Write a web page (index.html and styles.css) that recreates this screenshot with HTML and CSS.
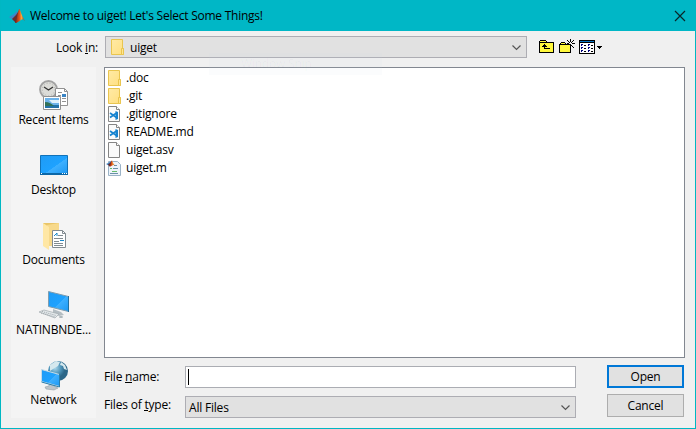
FILE: index.html
```html
<!DOCTYPE html>
<html lang="en">
<head>
<meta charset="utf-8">
<title>Welcome to uiget!</title>
<link rel="stylesheet" href="styles.css">
</head>
<body>
<svg width="0" height="0" class="defs">
  <defs>
    <linearGradient id="fold" x1="0" y1="0" x2="1" y2="1"><stop offset="0" stop-color="#ffeaa6"/><stop offset="1" stop-color="#ffdf80"/></linearGradient>
    <linearGradient id="blue" x1="0" y1="0" x2="1" y2="1"><stop offset="0" stop-color="#1f9bf5"/><stop offset=".55" stop-color="#1ea2ff"/><stop offset=".56" stop-color="#3eb0ff"/><stop offset="1" stop-color="#1b98f3"/></linearGradient>
    <radialGradient id="globe" cx=".35" cy=".35"><stop offset="0" stop-color="#a9d6ea"/><stop offset=".6" stop-color="#4d94b9"/><stop offset="1" stop-color="#2b6688"/></radialGradient>
    <linearGradient id="flame"><stop offset="0" stop-color="#7b1d12"/><stop offset=".45" stop-color="#e2561b"/><stop offset=".65" stop-color="#f5a43a"/><stop offset="1" stop-color="#9c2310"/></linearGradient>
    <symbol id="folder" viewBox="0 0 16 16"><path fill="url(#fold)" stroke="#e9c54f" d="M2.500.500h11v9h1v6h-12z"/><path fill="#ffe591" stroke="#e9c54f" d="M12.500 9.500h2v6h-2z"/></symbol>
    <symbol id="page" viewBox="0 0 16 16"><path fill="#fafafa" stroke="#858585" d="M2.500.500h8l3 3v12h-11z"/><path fill="#fff" stroke="#858585" d="M10.500.500v3h3"/></symbol>
    <symbol id="code" viewBox="0 0 16 16"><use href="#page"/><path fill="none" stroke="#1683d0" stroke-width="1.700" d="M4 7l6.500 4.500M4 11.500l6.500-4.500"/><path fill="#1683d0" d="M9.500 5l2.500 1v7l-2.500 1z"/></symbol>
    <symbol id="matlab" viewBox="0 0 16 16"><path fill="#3f86c6" d="M0 9l5-3 3-3 1 4-5 5z"/><path fill="#6b2a2a" d="M3 11l4-4 4-6-1 10-3 4z"/><path fill="url(#flame)" d="M6 15c2-3 2-8 4-14 1-1 2 6 6 12-2-2-3-2-4-1-2 1-4 3-6 3z"/></symbol>
  </defs>
</svg>
<main class="window">
  <header class="titlebar">
    <svg class="icon16"><use href="#matlab"/></svg>
    <span class="title">Welcome to uiget! Let's Select Some Things!</span>
    <svg class="close" viewBox="0 0 10 10"><path d="M0 0l10 10M10 0L0 10"/></svg>
  </header>
  <section class="lookbar">
    <span class="look-label">Look <u>i</u>n:</span>
    <div class="combo look-combo"><svg class="icon16"><use href="#folder"/></svg><span>uiget</span><svg class="chev" viewBox="0 0 9 5"><path d="M.500.500l4 4 4-4"/></svg></div>
    <nav class="tools">
      <svg width="16" height="16" shape-rendering="crispEdges"><path fill="#fff83c" d="M1 2h6v2h7v9H1z"/><path fill="#000" d="M1 1h6v1H1zM0 2h1v12H0zM7 2h1v1H7zM1 3h14v1H1zM14 3h1v11h-1zM0 13h15v1H0zM5 5h1v5H5zM4 6h3v1H4zM3 7h5v1H3zM5 9h6v1H5z"/></svg>
      <svg width="17" height="16" shape-rendering="crispEdges"><path fill="#fff83c" d="M2 4h4v1H2zM1 6h10v7H1z"/><path fill="#000" d="M2 3h4v1H2zM1 4h1v1H1zM6 4h1v1H6zM0 5h12v1H0zM0 5h1v9H0zM11 5h1v9h-1zM0 13h12v1H0zM11 0h1v3h-1zM8 1h1v1H8zM9 2h1v1H9zM14 1h1v1h-1zM13 2h1v1h-1zM8 4h2v1H8zM13 4h3v1h-3zM10 3h1v1h-1zM12 3h1v1h-1zM12 6h1v1h-1zM13 7h1v1h-1zM14 8h1v1h-1z"/></svg>
      <svg class="views" width="24" height="16" shape-rendering="crispEdges"><path fill="#000" d="M0 1h16v14H0z"/><path fill="#fff" d="M1 4h14v10H1z"/><path fill="#0875c5" d="M1 2h14v1H1z"/><path fill="#000" d="M5 6h2v1H5zM5 9h2v1H5zM5 12h2v1H5zM12 6h2v1h-2zM12 9h2v1h-2zM12 12h2v1h-2zM18 7h5v1h-5zM19 8h3v1h-3zM20 9h1v1h-1z"/><path fill="#000080" d="M2 5h2v1H2zM2 6h1v1H2zM2 8h2v1H2zM2 9h1v1H2zM2 11h2v1H2zM2 12h1v1H2zM9 5h2v1H9zM9 6h1v1H9zM9 8h2v1H9zM9 9h1v1H9zM9 11h2v1H9zM9 12h1v1H9z"/></svg>
    </nav>
  </section>
  <section class="content">
    <aside class="places">
      <div class="place"><svg class="icon32" viewBox="0 0 32 32">
        <circle cx="10.500" cy="9.500" r="8.500" fill="#dcdcd8" stroke="#a2a2a2" stroke-width="1.800"/><circle cx="10.500" cy="9.500" r="6.300" fill="none" stroke="#b0b0b0" stroke-dasharray="1 2"/><path fill="none" stroke="#333" stroke-width="1.300" d="M6 7l4.500 3 4.500-3"/>
        <path fill="#fff" stroke="#919191" d="M17.500 8.500h9l3 3v14h-12z"/><path fill="none" stroke="#919191" d="M26.500 8.500v3h3M20 12.500h4M20 15.500h3M24 18.500h4M24 21.500h4"/><path fill="#3984c4" d="M24 14h4v3h-4z"/>
        <path fill="#fff" stroke="#919191" d="M5.500 16.500h17v13h-17z"/><path fill="#6db3ea" d="M7 18h14v10H7z"/><path fill="#2371a8" d="M7 25h14v3H7z"/><path fill="#317158" d="M7 22c4 0 7 2 9 4H7z"/><path fill="#e0f1fb" d="M11 20h10v3h-7z"/></svg><span>Recent Items</span></div>
      <div class="place"><svg class="icon32" viewBox="0 0 32 32"><path fill="url(#blue)" stroke="#1072b9" d="M2.500 5.500h27v19h-27z"/><path fill="#0b67a7" d="M2 23h28v2H2z"/><path fill="#fff" d="M3 23h1v1H3zM24 23h1v1h-1zM26 23h1v1h-1zM28 23h1v1h-1z"/></svg><span>Desktop</span></div>
      <div class="place"><svg class="icon32" viewBox="0 0 32 32"><path fill="#e9c568" d="M5 3h16v23H9z"/><path fill="#f7d98b" d="M9 5l12-2v23H9z"/><path fill="#ffe7a5" d="M5 3l6 4v23l-6-4z"/><path fill="#fff" stroke="#828b91" d="M14.500 10.500h10l3 3v14h-13z"/><path fill="none" stroke="#828b91" d="M24.500 10.500v3h3M20 15.500h5M16 18.500h9M16 21.500h5M16 23.500h9M16 25.500h9"/><path fill="none" stroke="#1787cb" d="M16 16l3-3v3M22 20.500h4"/></svg><span>Documents</span></div>
      <div class="place"><svg class="icon32" viewBox="0 0 32 32"><path fill="#b4bdc2" d="M15 19l8 3 3 3-5 1-6-3z"/><path fill="url(#blue)" stroke="#7f9daf" d="M10.500 1.500l20 5v15l-20-5z"/><path fill="none" stroke="#226f9f" d="M30.500 6v16"/><path fill="#e3e8ea" stroke="#a0a9ae" stroke-width=".7" d="M1 22l5-2 15 4-4 4z"/><path fill="none" stroke="#9da5aa" stroke-dasharray="1 1" d="M4 21.500l14 4M3 23l14 4"/><ellipse cx="23" cy="27" rx="2" ry="1" fill="#a9b3b8"/></svg><span>NATINBNDE...</span></div>
      <div class="place"><svg class="icon32" viewBox="0 0 32 32"><circle cx="20" cy="11" r="10" fill="url(#globe)"/><path fill="#d5e8ee" d="M12 5l6-4 4 1-2 4-5 3-3 2zM23 2l4 3 2 5-3-1-1-3-3-1z"/><path fill="#bdc5ca" stroke="#89949b" stroke-width=".5" d="M11 23h5v3l4 2-4 2-8-1-1-2 4-1z"/><path fill="url(#blue)" stroke="#c6dce7" d="M3.500 9.500l18 5v12l-18-5z"/><path fill="none" stroke="#287eac" d="M21.500 14v13l-18-5"/></svg><span>Network</span></div>
    </aside>
    <div class="main">
      <ul class="files">
        <li><svg class="icon16"><use href="#folder"/></svg><span>.doc</span></li>
        <li><svg class="icon16"><use href="#folder"/></svg><span>.git</span></li>
        <li><svg class="icon16"><use href="#code"/></svg><span>.gitignore</span></li>
        <li><svg class="icon16"><use href="#code"/></svg><span>README.md</span></li>
        <li><svg class="icon16"><use href="#page"/></svg><span>uiget.asv</span></li>
        <li><svg class="icon16" viewBox="0 0 16 16"><path fill="#edf4fa" stroke="#9bb3c7" d="M2.500 1.500h9l3 3v11h-12z"/><path fill="none" stroke="#6b8fa9" d="M8 5.500h3M7 8.500h5M4 13.500h8"/><path fill="none" stroke="#65bb6e" d="M4 8.500h2M6 11.500h5"/><svg x="0" y="0" width="9" height="7" viewBox="0 0 16 16" preserveAspectRatio="none"><use href="#matlab" width="16" height="16"/></svg></svg><span>uiget.m</span></li>
      </ul>
      <form class="fields">
        <label>File <u>n</u>ame:</label><div class="input"><i class="caret"></i></div><button type="button" class="open">Open</button>
        <label class="type-label">Files of <u>t</u>ype:</label><div class="combo types"><span>All Files</span><svg class="chev" viewBox="0 0 9 5"><path d="M.500.500l4 4 4-4"/></svg></div><button type="button">Cancel</button>
      </form>
    </div>
  </section>
  <div class="ghost">Window Snip</div>
</main>
</body>
</html>
```
FILE: styles.css
```css
* { box-sizing: border-box; }
body { margin: 0; font: 12px/16px "Open Sans", "Noto Sans", sans-serif; color: #000; letter-spacing: -0.2px; overflow: hidden; }
svg { display: block; flex: none; }
.defs { position: absolute; }
.window { position: relative; width: 696px; height: 429px; background: #f0f0f0; border: 1px solid #00b7c3; border-top: 0; }
.titlebar { height: 31px; background: #00b7c6; display: flex; align-items: center; padding: 0 10px 0 8px; }
.title { margin-left: 5px; flex: 1; white-space: nowrap; letter-spacing: -0.24px; }
.close { width: 10px; height: 10px; overflow: visible; }
.close path { stroke: #08272a; stroke-width: 1.200; fill: none; }
.icon16 { width: 16px; height: 16px; }
.icon32 { width: 32px; height: 32px; }
.lookbar { height: 36px; display: flex; align-items: flex-start; padding-top: 5px; }
.look-label { width: 104px; padding: 4px 7px 0 0; text-align: right; }
u { display: inline-block; height: 14px; text-decoration: none; border-bottom: 1px solid #000; vertical-align: top; }
.combo { height: 22px; border: 1px solid #adadb3; background: #e1e1e1; display: flex; align-items: center; padding: 0 5px 0 3px; }
.combo span { padding-top: 2px; }
.combo .chev { margin-left: auto; }
.look-combo { width: 422px; }
.look-combo span { margin-left: 5px; }
.chev { width: 9px; height: 5px; overflow: visible; }
.chev path { fill: none; stroke: #555; stroke-width: 1.200; }
.tools { display: flex; gap: 4px; margin: 3px 0 0 12px; }
.views { margin-left: -1px; }
.content { display: flex; padding-left: 10px; gap: 8px; }
.places { width: 85px; height: 351px; background: #f4f4f4; padding-top: 13px; }
.place { height: 70px; display: flex; flex-direction: column; align-items: center; }
.place span { white-space: nowrap; }
.main { width: 581px; }
.files { width: 581px; height: 291px; margin: 0; padding: 1px; list-style: none; background: #fff; border: 1px solid #828790; }
.files li { height: 18px; display: flex; align-items: center; gap: 4px; }
.fields { display: grid; grid-template-columns: 81px 391px 77px; grid-template-rows: 23px 23px; row-gap: 6px; margin-top: 7px; }
.fields label { padding-top: 4px; }
.fields .type-label { padding-top: 3px; }
.input { height: 22px; margin-top: 1px; background: #fff; border: 1px solid #abadb3; padding: 2px; }
.caret { display: block; width: 1px; height: 16px; background: #000; }
.types { margin-top: 2px; }
button { margin: 0 -31px 0 31px; width: 77px; height: 23px; border: 1px solid #adadad; border-radius: 0; background: #e1e1e1; color: #000; font: inherit; letter-spacing: inherit; padding: 0; }
.open { border: 2px solid #0078d7; }
.ghost { position: absolute; left: 208px; top: 53px; width: 173px; height: 22px; padding: 3px 0 0 32px; color: rgba(80, 80, 120, .04); background: rgba(200, 215, 235, .08); }
```
